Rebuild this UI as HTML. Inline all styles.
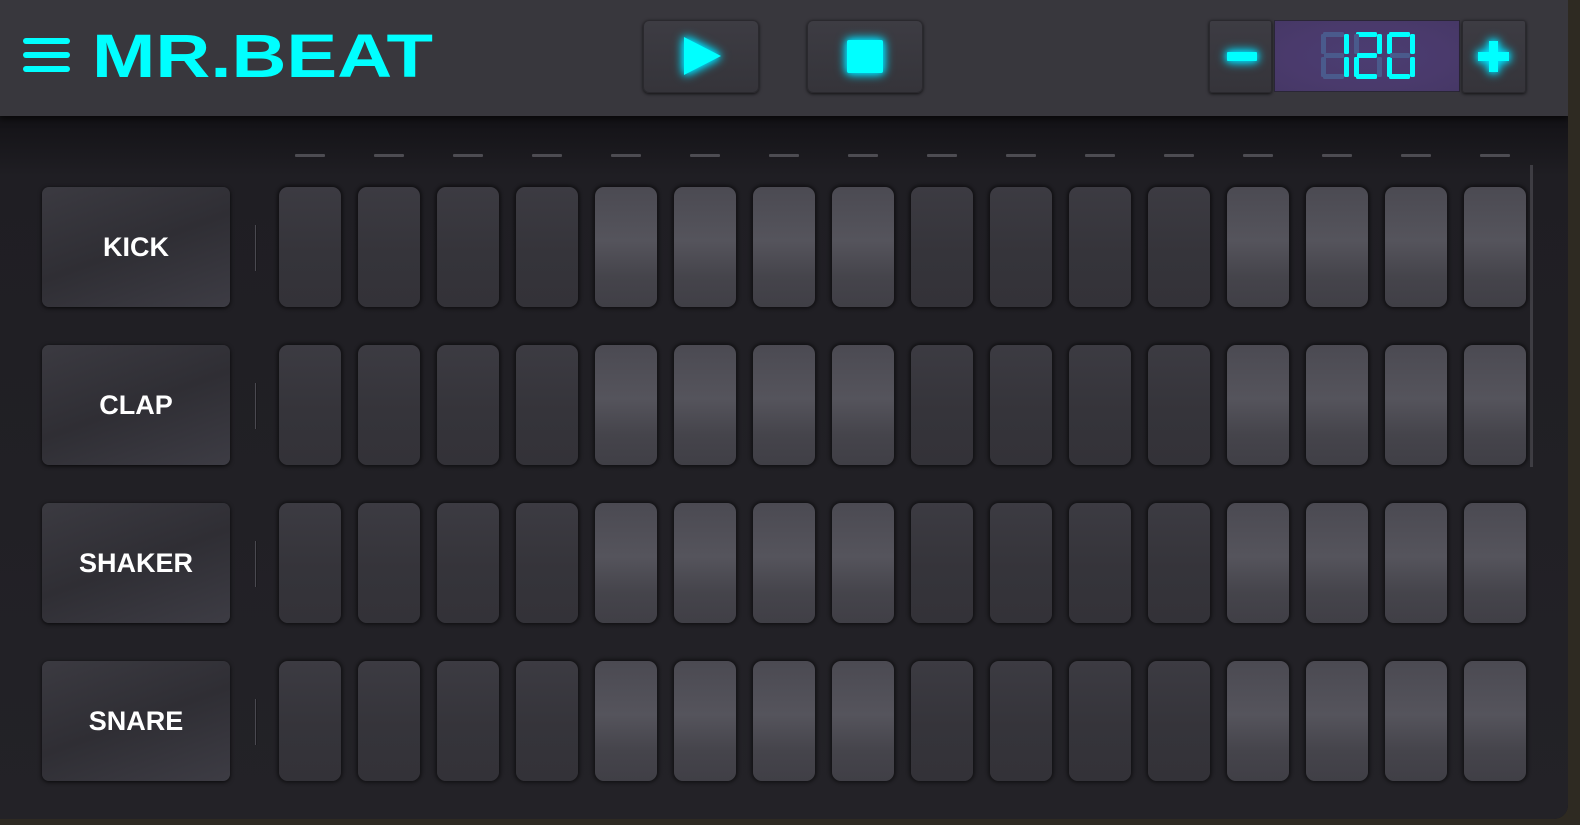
<!DOCTYPE html>
<html><head><meta charset="utf-8"><style>
*{margin:0;padding:0;box-sizing:border-box}
body{width:1580px;height:825px;background:#2e2a22;overflow:hidden;position:relative;font-family:"Liberation Sans",sans-serif}
.app{position:absolute;left:0;top:0;width:1568px;height:819px;background:#222126;border-radius:0 0 14px 0;overflow:hidden;box-shadow:inset -6px 0 8px rgba(0,0,0,.4)}
.hdr{position:absolute;left:0;top:0;width:1568px;height:116px;background:#38373d;box-shadow:0 3px 6px rgba(0,0,0,.6)}
.panel{position:absolute;left:0;top:116px;width:1568px;height:703px;background:linear-gradient(#131216,#1f1e23 60px,#232227)}
.btn{position:absolute;border-radius:6px;background:linear-gradient(#3d3c43,#35343a);box-shadow:0 1px 3px rgba(0,0,0,.7);border:1px solid #2a292e}
.lbl{position:absolute;left:42px;width:188px;height:120px;border-radius:7px;background:linear-gradient(160deg,#3b3a41,#2f2e34 50%,#3d3c44);box-shadow:0 1px 4px rgba(0,0,0,.8);color:#fff;font-weight:bold;font-size:27px;display:flex;align-items:center;justify-content:center}
.sep{position:absolute;left:255px;width:2px;height:46px;background:#4a4950;border-right:1px solid #1a191d}
.pad{position:absolute;width:62px;height:120px;border-radius:9px;box-shadow:0 0 3px 2px rgba(0,0,0,.45)}
.d{background:linear-gradient(#3c3b42,#35343a 55%,#333238)}
.l{background:linear-gradient(#4b4a52,#55545c 45%,#45444b 75%,#403f46)}
.mk{position:absolute;top:154px;width:30px;height:3px;background:#4d4c52;border-radius:1px}
.glow{filter:drop-shadow(0 0 5px #00e5ff) drop-shadow(0 0 3px #00c0e0)}
</style></head><body>
<div class="app">
<div class="panel"></div>
<div class="hdr">
 <svg width="460" height="116" style="position:absolute;left:0;top:0">
  <g fill="#00ffff">
   <rect x="23" y="38" width="47" height="6" rx="3"/>
   <rect x="23" y="52" width="47" height="6" rx="3"/>
   <rect x="23" y="66" width="47" height="6" rx="3"/>
  </g>
  <text x="92" y="76" fill="#00ffff" font-family="Liberation Sans" font-weight="bold" font-size="54" textLength="341" lengthAdjust="spacingAndGlyphs" transform="translate(0,-9) scale(1,1.13)">MR.BEAT</text>
 </svg>
 <div class="btn" style="left:643px;top:20px;width:116px;height:73px"></div>
 <svg class="glow" width="40" height="40" style="position:absolute;left:684px;top:37px"><polygon points="0,0 37,19 0,38" fill="#00ffff"/></svg>
 <div class="btn" style="left:807px;top:20px;width:116px;height:73px"></div>
 <div class="glow" style="position:absolute;left:847px;top:40px;width:36px;height:33px;background:#00ffff;border-radius:2px"></div>
 <div class="btn" style="left:1209px;top:20px;width:63px;height:73px;border-radius:3px"></div>
 <div class="glow" style="position:absolute;left:1227px;top:52px;width:30px;height:9px;background:#00ffff;border-radius:1px"></div>
 <div style="position:absolute;left:1274px;top:20px;width:186px;height:72px;background:radial-gradient(ellipse at center,#4b3d72,#4a3a6c 60%,#463866);border:1px solid #2a2636"></div>
 <svg id="lcd" width="186" height="72" style="position:absolute;left:1274px;top:20px"></svg>
 <span style="position:absolute;left:-9999px">120</span>
 <div class="btn" style="left:1462px;top:20px;width:64px;height:73px;border-radius:3px"></div>
 <svg class="glow" width="32" height="32" style="position:absolute;left:1478px;top:41px"><path d="M11 0h9v11h11v9H20v11h-9V20H0v-9h11z" fill="#00ffff"/></svg>
</div>
<div style="position:absolute;left:1530px;top:165px;width:3px;height:302px;background:#3e3d43"></div>
<div id="g"></div>
</div>
<script>
var h='',names=['KICK','CLAP','SHAKER','SNARE'];
for(var c=0;c<16;c++)h+='<div class="mk" style="left:'+(295+c*79)+'px"></div>';
for(var r=0;r<4;r++){var y=187+r*158;
h+='<div class="lbl" style="top:'+y+'px">'+names[r]+'</div><div class="sep" style="top:'+(y+38)+'px"></div>';
for(var c=0;c<16;c++){var lt=(c>=4&&c<8)||c>=12;h+='<div class="pad '+(lt?'l':'d')+'" style="left:'+(279+c*79)+'px;top:'+y+'px"></div>';}}
document.getElementById('g').innerHTML=h;
// seven segment
var segs={a:[2,0,21,5],b:[23,2,5,20],c:[23,25,5,20],d:[2,42,21,5],e:[0,25,5,20],f:[0,2,5,20],g:[3,21,20,5]};
var on={'1':'bc','2':'abged','0':'abcdef'};
var s='',xs=[47,80,113],ds=['1','2','0'];
for(var i=0;i<3;i++){for(var k in segs){var q=segs[k],lit=on[ds[i]].indexOf(k)>=0;
s+='<rect x="'+(xs[i]+q[0])+'" y="'+(12+q[1])+'" width="'+q[2]+'" height="'+q[3]+'" rx="1.5" fill="'+(lit?'#00ffff':'#4a5a8c')+'"/>';}}
document.getElementById('lcd').innerHTML=s;
</script>
</body></html>
